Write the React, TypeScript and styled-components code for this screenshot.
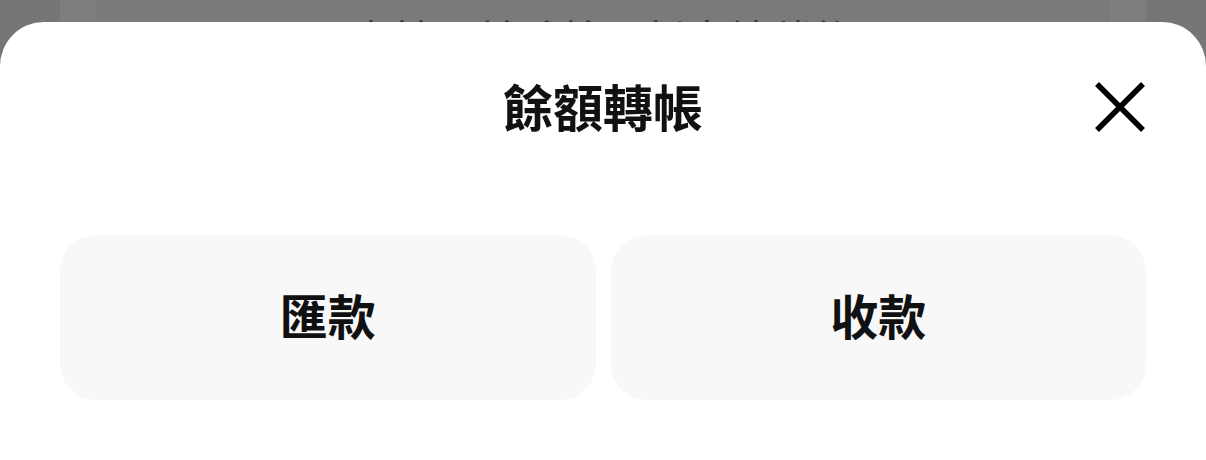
import React from 'react';
import styled, { createGlobalStyle } from 'styled-components';

const GlobalStyle = createGlobalStyle`
    html, body {
        margin: 0;
        padding: 0;
        height: 100%;
        overflow: hidden;
        background: #777777;
        font-family: "Noto Sans CJK TC", "Noto Sans", sans-serif;
    }
`;

const Page = styled.div`
    height: 100vh;
    display: flex;
    justify-content: center;
    padding: 0 60px;
    background: #767676;
`;

const PageCard = styled.div`
    flex: 1;
    background: #7e7e7e;
    padding: 0 36px;
    display: flex;
`;

const PageInner = styled.div`
    flex: 1;
    background: #7a7a7a;
    padding-top: 13px;
    text-align: center;
`;

const PageText = styled.div`
    font-size: 40px;
    line-height: 1.2;
    color: #333333;
    letter-spacing: 2px;
`;

const Sheet = styled.div`
    position: fixed;
    top: 22px;
    left: 0;
    right: 0;
    bottom: -40px;
    background: #ffffff;
    border-radius: 44px 44px 0 0;
    padding: 37px 60px 0;
`;

const Header = styled.div`
    display: grid;
    grid-template-columns: 52px 1fr 52px;
    align-items: center;
    height: 96px;
`;

const Title = styled.h1`
    margin: 0 0 4px;
    grid-column: 2;
    text-align: center;
    font-size: 50px;
    font-weight: 700;
    color: #111111;
`;

const CloseButton = styled.button`
    grid-column: 3;
    width: 52px;
    height: 52px;
    padding: 0;
    border: none;
    background: none;
    display: flex;
    align-items: center;
    justify-content: center;
    cursor: pointer;
`;

const Actions = styled.div`
    display: grid;
    grid-template-columns: 1fr 1fr;
    gap: 15px;
    margin-top: 80px;
`;

const ActionButton = styled.button`
    height: 165px;
    border: none;
    border-radius: 36px;
    background: #f8f8f8;
    padding: 0 0 8px;
    font-family: "Noto Sans CJK TC", "Noto Sans", sans-serif;
    font-size: 48px;
    font-weight: 700;
    color: #111111;
    cursor: pointer;
`;

const CloseIcon = () => (
    <svg width="52" height="52" viewBox="0 0 52 52">
        <path d="M3 3 L49 49 M49 3 L3 49" stroke="#000" strokeWidth="5.5" fill="none" />
    </svg>
);

export default function App() {
    return (
        <>
            <GlobalStyle />
            <Page>
                <PageCard>
                    <PageInner>
                        <PageText>由於目前系統更新中請稍後</PageText>
                    </PageInner>
                </PageCard>
            </Page>
            <Sheet>
                <Header>
                    <Title>餘額轉帳</Title>
                    <CloseButton aria-label="關閉">
                        <CloseIcon />
                    </CloseButton>
                </Header>
                <Actions>
                    <ActionButton>匯款</ActionButton>
                    <ActionButton>收款</ActionButton>
                </Actions>
            </Sheet>
        </>
    );
}
